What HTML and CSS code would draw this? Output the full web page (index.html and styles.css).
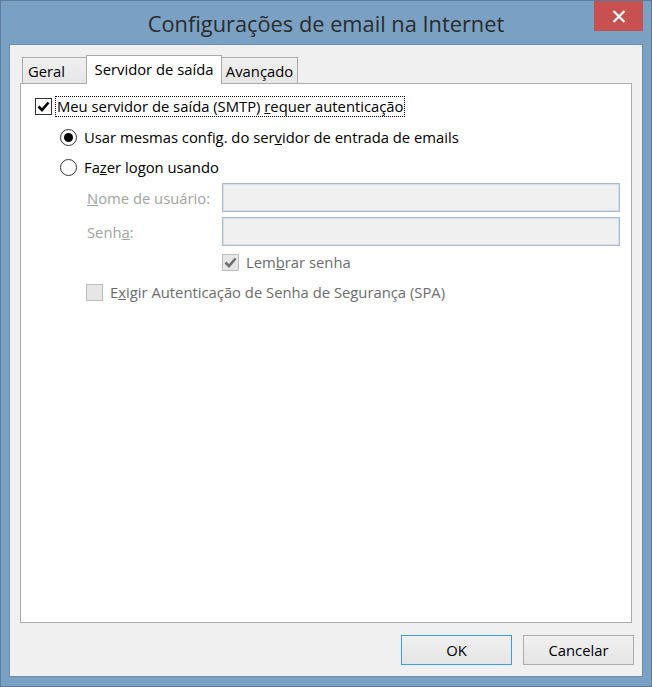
FILE: index.html
```html
<!DOCTYPE html>
<html lang="pt-BR">
<head>
<meta charset="utf-8">
<title>Configurações de email na Internet</title>
<link rel="stylesheet" href="styles.css">
</head>
<body>
<div class="window">
  <div class="titlebar">
    <div class="tb-spacer"></div>
    <div class="title">Configurações de email na Internet</div>
    <div class="tb-right">
      <div class="close">
        <svg width="14" height="13" viewBox="0 0 14 13"><path d="M1.5 1 L12.5 12 M12.5 1 L1.5 12" stroke="#fff" stroke-width="2.2" fill="none"/></svg>
      </div>
    </div>
  </div>
  <div class="client">
    <div class="tabs">
      <div class="tab tab-geral">Geral</div>
      <div class="tab tab-sel">Servidor de saída</div>
      <div class="tab tab-av">Avançado</div>
    </div>
    <div class="page">
      <div class="row r1">
        <span class="chk checked"><svg width="15" height="15" viewBox="0 0 15 15"><path d="M2.5 7.5 L6 11 L12.5 3.5" stroke="#000" stroke-width="2.6" fill="none"/></svg></span>
        <span class="focus-text">Meu servidor de saída (SMTP) <u>r</u>equer autenticação</span>
      </div>
      <div class="row r2">
        <span class="radio on"><span class="dot"></span></span>
        <span class="lbl">Usar mesmas config. do ser<u>v</u>idor de entrada de emails</span>
      </div>
      <div class="row r3">
        <span class="radio"></span>
        <span class="lbl">Fa<u>z</u>er logon usando</span>
      </div>
      <div class="row r4">
        <span class="field-lbl"><u>N</u>ome de usuário:</span>
        <span class="input"></span>
      </div>
      <div class="row r5">
        <span class="field-lbl">Senh<u>a</u>:</span>
        <span class="input"></span>
      </div>
      <div class="row r6">
        <span class="chk disabled"><svg width="15" height="15" viewBox="0 0 15 15"><path d="M2.5 7.5 L6 11 L12.5 3.5" stroke="#6f6f6f" stroke-width="2.6" fill="none"/></svg></span>
        <span class="lbl dis">Lem<u>b</u>rar senha</span>
      </div>
      <div class="row r7">
        <span class="chk disabled"></span>
        <span class="lbl dis">E<u>x</u>igir Autenticação de Senha de Segurança (SPA)</span>
      </div>
    </div>
    <div class="buttons">
      <div class="btn btn-default">OK</div>
      <div class="btn">Cancelar</div>
    </div>
  </div>
</div>
</body>
</html>
```
FILE: styles.css
```css
html, body {
  margin: 0;
  padding: 0;
  background: #7aa1c4;
}
body {
  font-family: "Open Sans", "Noto Sans", sans-serif;
  font-size: 14.8px;
  color: #000;
}
.window {
  width: 652px;
  height: 687px;
  box-sizing: border-box;
  border: 1px solid #5b7d9b;
  background: #7aa1c4;
  display: flex;
  flex-direction: column;
}
.titlebar {
  height: 43px;
  flex: none;
  display: grid;
  grid-template-columns: 1fr auto 1fr;
  padding-right: 8px;
  padding-left: 8px;
}
.title {
  font-size: 21.8px;
  color: #2b2b2b;
  line-height: 45px;
  white-space: nowrap;
}
.tb-right {
  display: flex;
  justify-content: flex-end;
  align-items: flex-start;
}
.close {
  width: 49px;
  height: 30px;
  background: #c75050;
  display: flex;
  align-items: center;
  justify-content: center;
}
.client {
  flex: 1;
  margin: 0 8px 9px 8px;
  border: 1px solid #6b8dac;
  background: #f0f0f0;
  display: flex;
  flex-direction: column;
  padding: 10px 10px 11px 10px;
}
.tabs {
  height: 28px;
  display: flex;
  align-items: flex-end;
  padding-left: 2px;
  flex: none;
}
.tab {
  box-sizing: border-box;
  height: 26px;
  border: 1px solid #acacac;
  border-bottom: none;
  background: linear-gradient(#f0f0f0, #e6e6e6);
  line-height: 27px;
  white-space: nowrap;
}
.tab-geral {
  width: 64px;
  border-right: none;
  padding-left: 5px;
}
.tab-sel {
  width: 136px;
  height: 29px;
  margin-bottom: -1px;
  position: relative;
  z-index: 1;
  background: #fff;
  text-align: center;
  line-height: 27px;
}
.tab-av {
  width: 76px;
  border-left: none;
  text-align: center;
}
.page {
  flex: 1;
  background: #fff;
  border: 1px solid #acacac;
  display: flex;
  flex-direction: column;
  padding-left: 14px;
}
.row {
  display: flex;
  align-items: center;
  height: 20px;
  white-space: nowrap;
}
.r1 { margin-top: 12px; }
.r2 { margin-top: 11px; padding-left: 25px; }
.r3 { margin-top: 10px; padding-left: 25px; }
.r4 { margin-top: 6px; height: 29px; padding-left: 52px; }
.r5 { margin-top: 5px; height: 29px; padding-left: 52px; }
.r6 { margin-top: 6px; padding-left: 187px; }
.r7 { margin-top: 10px; padding-left: 51px; }
.chk {
  width: 17px;
  height: 17px;
  box-sizing: border-box;
  border: 1px solid #333;
  background: #fff;
  display: flex;
  align-items: center;
  justify-content: center;
  flex: none;
}
.chk.disabled {
  border-color: #bcbcbc;
  background: #e6e6e6;
}
.focus-text {
  margin-left: 4px;
  padding: 0 1px;
  outline: 1px dotted #000;
  line-height: 19px;
}
.radio {
  width: 17px;
  height: 17px;
  box-sizing: border-box;
  border: 1px solid #333;
  border-radius: 50%;
  background: #fff;
  display: flex;
  align-items: center;
  justify-content: center;
  flex: none;
}
.dot {
  width: 9px;
  height: 9px;
  border-radius: 50%;
  background: #000;
}
.lbl {
  margin-left: 7px;
}
.dis {
  color: #6d6d6d;
}
.field-lbl {
  width: 135px;
  color: #a3a3a3;
  flex: none;
}
.input {
  width: 398px;
  height: 29px;
  box-sizing: border-box;
  border: 1px solid #a9bbd0;
  box-shadow: inset 0 0 0 1px #d3e0ee;
  background: #f0f0f0;
  flex: none;
}
.buttons {
  flex: none;
  display: flex;
  justify-content: flex-end;
  gap: 11px;
  margin-top: 12px;
  margin-right: -2px;
}
.btn {
  width: 111px;
  height: 30px;
  box-sizing: border-box;
  border: 1px solid #adadad;
  background: linear-gradient(#f0f0f0, #e5e5e5);
  display: flex;
  align-items: center;
  justify-content: center;
}
.btn-default {
  border-color: #3a9bf2;
}
```
